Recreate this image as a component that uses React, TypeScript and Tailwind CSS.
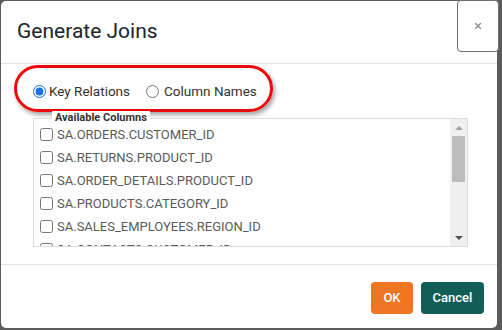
import { X } from "lucide-react";

const columns = [
  "SA.ORDERS.CUSTOMER_ID",
  "SA.RETURNS.PRODUCT_ID",
  "SA.ORDER_DETAILS.PRODUCT_ID",
  "SA.PRODUCTS.CATEGORY_ID",
  "SA.SALES_EMPLOYEES.REGION_ID",
  "SA.CONTACTS.CUSTOMER_ID",
  "SA.INVOICES.ORDER_ID",
];

export default function App() {
  return (
    <div className="w-[502px] h-[330px] overflow-hidden bg-[#5c5c5c] pt-[1px] pl-[1px] font-['Roboto',sans-serif]">
      <div className="relative w-[496px] h-[327px] bg-white rounded-[5px] flex flex-col">
        {/* header */}
        <div className="h-[63px] shrink-0 border-b border-[#dee2e6] flex items-center pl-[16px] pb-[2px]">
          <h2 className="text-[21px] text-[#212529] leading-none">Generate Joins</h2>
        </div>
        <button className="absolute top-[-1px] right-[-2px] w-[42px] h-[52px] rounded-[4px] border-[1.5px] border-[#6f6f6f] bg-white flex items-center justify-center text-[#888]">
          <X size={10} strokeWidth={3} />
        </button>

        {/* body */}
        <div className="relative flex-1 pl-[32px]">
          <div className="absolute left-[13px] top-[1px] w-[259px] h-[47px] rounded-[24px] border-[3px] border-[#ee0a0a] shadow-[2px_3px_4px_rgba(0,0,0,0.35)] pointer-events-none" />

          <div className="flex items-center h-[20px] mt-[17px] text-[13.5px] text-[#333]">
            <label className="flex items-center gap-[3px]">
              <input type="radio" name="mode" defaultChecked className="m-0 w-[13px] h-[13px] accent-[#1a73e8]" />
              <span>Key Relations</span>
            </label>
            <label className="flex items-center gap-[5px] ml-[16px]">
              <input type="radio" name="mode" className="m-0 w-[13px] h-[13px]" />
              <span>Column Names</span>
            </label>
          </div>

          <div className="relative mt-[17px] w-[435px] h-[129px] border border-[#dcdcdc] flex">
            <span className="absolute top-[-8px] left-[18px] bg-white px-[3px] text-[11px] font-bold leading-[13px] text-[#333]">
              Available Columns
            </span>
            <div className="flex-1 overflow-hidden pt-[4px] pl-[6px]">
              {columns.map((c) => (
                <label key={c} className="flex items-center h-[23px] gap-[4px] text-[13px] text-[#5a5a5a]">
                  <input type="checkbox" className="m-0 w-[13px] h-[13px] shrink-0" />
                  <span>{c}</span>
                </label>
              ))}
            </div>
            <div className="w-[17px] shrink-0 bg-[#f0f0f0] flex flex-col items-center">
              <div className="h-[17px] flex items-center justify-center">
                <div className="w-0 h-0 border-l-[4px] border-r-[4px] border-b-[4px] border-l-transparent border-r-transparent border-b-[#a3a3a3]" />
              </div>
              <div className="w-[13px] h-[46px] bg-[#bdbdbd]" />
              <div className="flex-1" />
              <div className="h-[17px] flex items-center justify-center">
                <div className="w-0 h-0 border-l-[4px] border-r-[4px] border-t-[4px] border-l-transparent border-r-transparent border-t-[#505050]" />
              </div>
            </div>
          </div>
        </div>

        {/* footer */}
        <div className="h-[64px] shrink-0 border-t border-[#dee2e6] flex items-center justify-end gap-[8px] pr-[13px] pt-[2px]">
          <button className="h-[32px] w-[42px] rounded-[4px] bg-[#ee7623] text-white text-[13px] font-medium">OK</button>
          <button className="h-[32px] w-[63px] rounded-[4px] bg-[#115e57] text-white text-[13px] font-medium">Cancel</button>
        </div>
      </div>
    </div>
  );
}
